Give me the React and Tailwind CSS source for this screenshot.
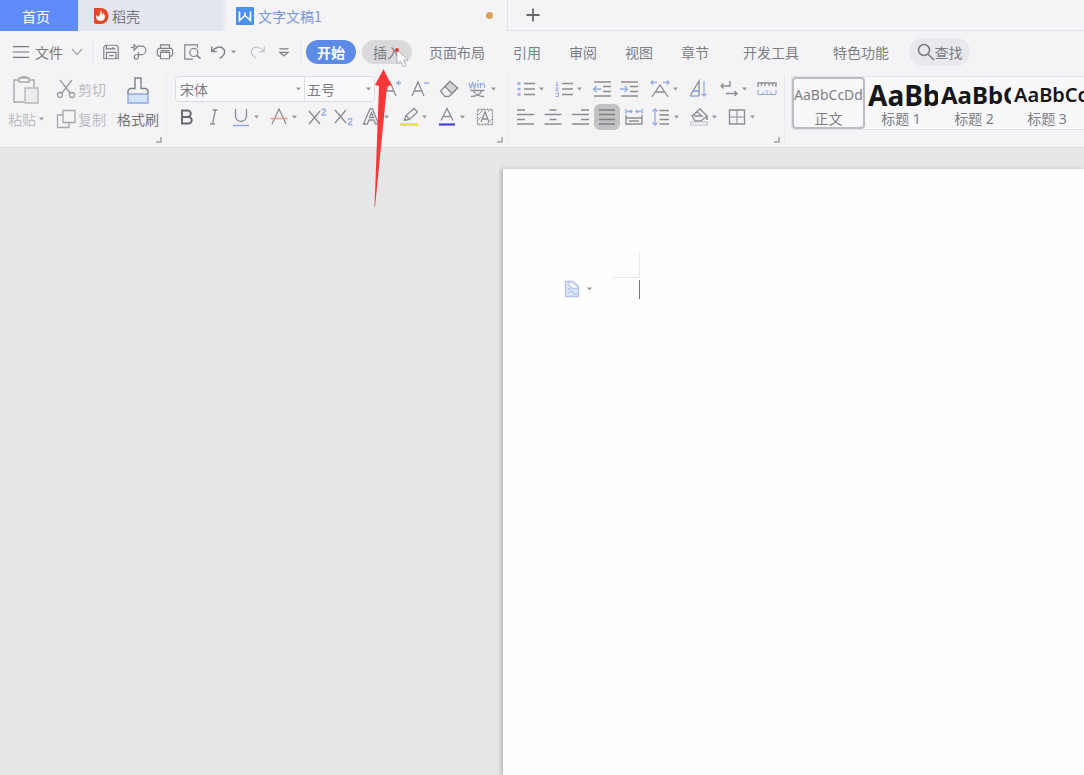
import React from 'react';
import clsx from 'clsx';

const BLUE = '#94abe8';

// Small line drawing on a 20x20 grid
function Glyph({ children, className = 'w-5 h-5' }) {
  return (
    <svg
      viewBox="0 0 20 20"
      fill="none"
      stroke="currentColor"
      strokeWidth="1.3"
      className={clsx('shrink-0', className)}
      aria-hidden="true"
    >
      {children}
    </svg>
  );
}

function Caret() {
  return (
    <svg viewBox="0 0 11 6" className="w-[11px] h-1.5 shrink-0 text-[#97979b]" aria-hidden="true">
      <path d="M3 1.5h5L5.5 4.5z" fill="currentColor" />
    </svg>
  );
}

function Tool({ label, icon, caret, active }) {
  return (
    <button aria-label={label} className="flex items-center h-[26px] text-[#8d8d91]">
      <span className={clsx('flex items-center', active && 'bg-[#c2c2c4] rounded-md -mx-[3px] p-[3px]')}>
        <Glyph>{icon}</Glyph>
      </span>
      {caret && <Caret />}
    </button>
  );
}

const icons = {
  save: <><path d="M2 17.500v-13l2-2h12l2 2v13zM5 2.500v4h10M5 17.500v-7h10.500v7M12 6.500v-2M8 14h5" /></>,
  exportDoc: <><path d="M2 5h4M5.500 2 9 5 5.500 8zM9 3.500h5a4.500 4.500 0 0 1 0 9.500H8.500M10.500 10v5.500a2.500 2.500 0 0 1-2.500 2.500c-3 0-3-4.500 0-5" /></>,
  print: <><path d="M5 6V2h10v4M5 14.500H3L1.500 13V8L3 6h14l1.500 2v5L17 14.500h-2M5 10.500h10v7H5zM5 8.500h10" /></>,
  preview: <><path d="M16 5V2H2v16h9" /><circle cx="12" cy="10.500" r="4.500" /><path d="m15.500 14 4 3.500" strokeWidth="1.800" /></>,
  undo: <><path d="M2 4v5.500h5.500M2.500 9C6 4.500 12 3 15 6.500s.500 7.500-4 10.500" strokeWidth="1.600" /></>,
  redo: <><path d="M18 4v5.500h-5.500M17.500 9C14 4.500 8 3 5 6.500s-.500 7.500 4 10.500" /></>,
  more: <><path d="M5 6.500h10M5.500 10.500 10 14.500l4.500-4z" /></>,

  bold: <><path d="M5 3.500h5.500a3.200 3.200 0 0 1 0 6.500H5zM5 10h6.500a3.200 3.200 0 0 1 0 6.500H5z" stroke="#66666b" strokeWidth="1.900" /></>,
  italic: <><path d="M8.500 3h5M6 17h5M11.500 3l-3 14" /></>,
  underline: <><path d="M4.500 2v7a5.500 5.500 0 0 0 11 0V2" /><path d="M2 18.500h16" stroke={BLUE} strokeWidth="1.500" /></>,
  strike: <><path d="m3 17 7-15 7 15" /><path d="M1.500 11.500h17" stroke="#ef9a92" strokeWidth="1.500" /></>,
  sup: <><path d="m2 4 11 13M13 4 2 17" /><path d="M15 3.500c0-2 3.500-2 3.500 0C18.500 5 15 6 15 8h4" stroke={BLUE} /></>,
  sub: <><path d="m1 3 11 13M12 3 1 16" /><path d="M14.500 13c0-2 3.500-2 3.500 0 0 1.500-3.500 2.500-3.500 4.500h4" stroke={BLUE} /></>,
  textEffect: <><path d="m2.500 17 6.500-15h2.500l6 15h-3l-1.500-4H8l-1.700 4zM8.500 10.500h4l-2-5z" /></>,
  highlight: <><path d="m5.500 13.500 1.500-5 8-7 3.500 3.500-8 7.500zM7 8.500l3.500 4" /><path d="M1 17.500h18" stroke="#e6e64a" strokeWidth="3" /></>,
  fontColor: <><path d="m4 13.500 6-12 6 12M6.500 9.500h7" /><path d="M2 17.500h16" stroke="#4b3fd0" strokeWidth="2.200" /></>,
  charShade: <><path d="M2.500 2.500h15v15h-15z" strokeDasharray="2 1" /><path d="m6 15 4-10 4 10M7.500 12h5" /><path d="m3 8 5-5M12 17l5-5M3 13l3-3M13 5l2-2" strokeWidth=".8" /></>,
  grow: <><path d="m3 17 6-14 6 14M5.500 12h7" /><path d="M15 4h5M17.500 1.500v5" stroke={BLUE} /></>,
  shrink: <><path d="m2 17 6-14 6 14M4.500 12h7" /><path d="M14 4h5" stroke={BLUE} /></>,
  eraser: <><path d="m1.500 12 9.500-9.500 7.500 6.500-8.500 8.500H6z" /><path d="m6 7.500 7 7 5.500-5.500L11 2.500z" fill="#d4d4d7" /></>,
  phonetic: <><path d="m1 4 1.500 5L4.500 4l2 5L8 4M10 9V4M12.500 9V4M12.500 6c1-2 4-2 4 .500V9M10 1v1.500" stroke={BLUE} /><path d="M2.500 11.500h14M5 11.500c2 4 7 6 11 6M14 11.500c-2 4-6 6-11 6" /></>,

  bullets: <><path d="M8 4.500h11M8 10h11M8 15.500h11" /><path d="M1.500 4.500h3M1.500 10h3M1.500 15.500h3" stroke={BLUE} strokeWidth="2.600" /></>,
  numbers: <><path d="M8 4.500h11M8 10h11M8 15.500h11" /><path d="M3 2.500v4M1.500 6.500h3M1.500 9h3l-3 2.500h3M1.500 14h3v3.500h-3" stroke={BLUE} strokeWidth="1" /></>,
  outdent: <><path d="M2 3h17M11 7.500h8M11 12.500h8M2 17h17" /><path d="M9 10H2M4.500 7 1.500 10l3 3" stroke={BLUE} /></>,
  indent: <><path d="M2 3h17M11 7.500h8M11 12.500h8M2 17h17" /><path d="M1 10h7M5.500 7l3 3-3 3" stroke={BLUE} /></>,
  scale: <><path d="m2 18 8-12 8 12M5.500 13h9" /><path d="M1 3.500h6M3 1.500l-2 2 2 2M13 3.500h6M17 1.500l2 2-2 2" stroke={BLUE} /></>,
  sort: <><path d="M2 17 11 2v15M5.500 12H11" /><path d="M2 17h9M5 12h6M16 2v15M13.500 14.500 16 17l2.500-2.500" stroke={BLUE} /></>,
  marks: <><path d="M11 2v5H2M4.500 4.500 2 7l2.500 2.500M7 14.500h11M15.500 12l2.500 2.500-2.500 2.500" /></>,
  ruler: <><path d="M1 8V4h18v4M4.500 4v3M8 4v3M12 4v3M15.500 4v3" /><path d="M1 11v4.500h18V11M10 11v4M5 15l2.500-2.500M15 15l-2.500-2.500" stroke={BLUE} strokeWidth="1" /></>,
  left: <><path d="M1 3h8M1 7.500h17M1 12.500h8M1 17h17" /></>,
  center: <><path d="M6.500 3h7M1.500 7.500h17M6.500 12.500h7M1.500 17h17" /></>,
  right: <><path d="M11 3h8M2 7.500h17M11 12.500h8M2 17h17" /></>,
  justify: <><path d="M2 3h16M2 7.500h16M2 12.500h16M2 17h16" stroke="#7f7f82" /></>,
  distribute: <><path d="M2 8v9h16V8M2 11h16M5 14h10" /><path d="M2 2v5M18 2v5M3 4.500h5M12 4.500h5M6.500 3 8 4.500 6.500 6M13.500 3 12 4.500 13.500 6" stroke={BLUE} /></>,
  spacing: <><path d="M8.500 3.500H18M8.500 8H18M8.500 12.500H18M8.500 17H18" /><path d="M4 2v16M1.500 4.500 4 2l2.500 2.500M1.500 15.500 4 18l2.500-2.500" stroke={BLUE} /></>,
  fill: <><path d="m3 9 8-7 7 7-6 5H6zM5 7.500 8 5l5 4H5" /><path d="M18 9v4" strokeWidth="1.800" /><path d="M1.500 15v3h17v-3z" stroke="#c3bcc4" strokeWidth="1" /></>,
  border: <><path d="M2.500 3h15v14h-15z" /><path d="M10 3v14M2.500 10h15" strokeWidth="1" /></>,
};

const fontRow = [
  ['加粗', 'bold'], ['倾斜', 'italic'], ['下划线', 'underline', true], ['删除线', 'strike', true],
  ['上标', 'sup'], ['下标', 'sub'], ['文字效果', 'textEffect', true], ['突出显示', 'highlight', true],
  ['字体颜色', 'fontColor', true], ['字符底纹', 'charShade'],
];

const paragraphTop = [
  [['项目符号', 'bullets', true], ['编号', 'numbers', true], ['减少缩进量', 'outdent'], ['增加缩进量', 'indent']],
  [['中文版式', 'scale', true], ['排序', 'sort']],
  [['显示标记', 'marks', true], ['标尺', 'ruler']],
];

const paragraphBottom = [
  ['左对齐', 'left'], ['居中对齐', 'center'], ['右对齐', 'right'], ['两端对齐', 'justify'],
  ['分散对齐', 'distribute'], ['行距', 'spacing', true], ['底纹颜色', 'fill', true], ['边框', 'border', true],
];

const styles = [
  { name: '标题 1', sample: 'AaBb', size: 'text-[28px] font-bold' },
  { name: '标题 2', sample: 'AaBbC', size: 'text-[24px] font-bold' },
  { name: '标题 3', sample: 'AaBbCc', size: 'text-[20px] font-semibold' },
];

function ToolRow({ items, className = 'gap-[7px]' }) {
  return (
    <div className={clsx('flex items-center', className)}>
      {items.map(([label, icon, caret]) => (
        <Tool key={icon} label={label} icon={icons[icon]} caret={caret} active={icon === 'justify'} />
      ))}
    </div>
  );
}

function Launcher() {
  return (
    <svg viewBox="0 0 6 6" className="absolute right-1 bottom-0.5 w-1.5 h-1.5" fill="none" stroke="#a3a3a7" strokeWidth="1.500">
      <path d="M5 0v5H0" />
    </svg>
  );
}

function TabBar() {
  return (
    <div className="flex h-[31px]">
      <button className="w-[78px] shrink-0 bg-[#608bfb] text-white pr-1.5">首页</button>
      <button className="w-[148px] shrink-0 bg-[#e3e5ef] border-r-3 border-[#ececf2] flex items-center pl-[15px] gap-[3px] text-[#77777c]">
        <svg viewBox="0 0 16 18" className="w-4 h-[18px]" aria-hidden="true">
          <path d="M1 1h7a7.500 8 0 0 1 0 16H3a2 2 0 0 1-2-2z" fill="#e04a27" />
          <path d="M7.500 3c2 2 1 4 1.500 5 1-.5 1-1.500 1-2.500 3 3 2.500 8-2 8.500C4 14 2.500 11 3.500 8c1 .5 1.500 1.500 2 2 1-2 2.500-4 2-7z" fill="#fff" />
        </svg>
        稻壳
      </button>
      <button className="w-[282px] shrink-0 border-r border-[#e2e2e6] flex items-center pl-[10px] pr-[14px] gap-1 text-[#7c97dd]">
        <svg viewBox="0 0 18 18" className="w-[18px] h-[18px]" aria-hidden="true">
          <rect width="18" height="18" rx="1" fill="#4a90ec" />
          <path d="M3.500 4.500v9L9 8.500l5.500 5v-9M9 8.500v-3" fill="none" stroke="#fff" strokeWidth="1.600" />
        </svg>
        文字文稿1
        <span className="ml-auto w-[7px] h-[7px] rounded-full bg-[#dda05c]" />
      </button>
      <div className="flex-1 border-b border-[#e2e2e6] flex items-center pl-[18px]">
        <button aria-label="新建">
          <svg viewBox="0 0 14 14" className="w-3.5 h-3.5" stroke="#66666b" strokeWidth="1.800">
            <path d="M7 .5v13M.5 7h13" />
          </svg>
        </button>
      </div>
    </div>
  );
}

function MenuBar() {
  const quick = [['保存', 'save'], ['输出', 'exportDoc'], ['打印', 'print'], ['打印预览', 'preview'], ['撤销', 'undo'], ['恢复', 'redo'], ['更多', 'more']];
  return (
    <div className="flex items-center h-[42px] pl-3 whitespace-nowrap">
      <button className="flex items-center text-[#77777c]">
        <Glyph className="w-[18px] h-[18px]"><path d="M1 4h18M1 10h18M1 16h18" /></Glyph>
        <span className="ml-[5px] mr-2">文件</span>
        <svg viewBox="0 0 12 8" className="w-3 h-2" fill="none" stroke="#a6a6aa" strokeWidth="1.200"><path d="m1 1 5 5.500L11 1" /></svg>
      </button>
      <div className="ml-[9px] w-px h-6 bg-[#e9e9ed]" />
      <div className="flex items-center gap-[9px] ml-[9px]">
        {quick.map(([label, icon]) => (
          <button key={icon} aria-label={label} className={clsx('flex items-center', icon === 'redo' ? 'text-[#c2c2c6]' : 'text-[#808085]')}>
            <Glyph className="w-[18px] h-[18px]">{icons[icon]}</Glyph>
            {icon === 'undo' && <Caret />}
          </button>
        ))}
      </div>
      <div className="ml-[7px] mr-[5px] w-px h-6 bg-[#e9e9ed]" />
      <button className="w-[50px] h-6 rounded-full bg-[#5c8ae6] text-white font-bold">开始</button>
      <button className="relative ml-1.5 w-[50px] h-6 rounded-full bg-[#dad9dc]">
        插入
        <svg viewBox="0 0 14 22" className="absolute left-[33px] top-2 w-3.5 h-[22px]" aria-hidden="true">
          <path d="M2 2v14l3.500-3 2.500 6 3-1.500-2.500-5.500H13z" fill="#f8f8fa" stroke="#a9a9ae" strokeWidth=".8" />
          <circle cx="2" cy="2" r="2" fill="#e03a44" />
        </svg>
      </button>
      <button className="ml-[17px]">页面布局</button>
      <div className="flex gap-7 ml-7">
        <button>引用</button>
        <button>审阅</button>
        <button>视图</button>
        <button>章节</button>
      </div>
      <div className="flex gap-[34px] ml-[34px]">
        <button>开发工具</button>
        <button>特色功能</button>
      </div>
      <button className="ml-5 w-[61px] h-7 rounded-full bg-[#e8e8ee] flex items-center justify-center">
        <svg viewBox="0 0 18 18" className="w-[18px] h-[18px]" fill="none" stroke="#77777c" strokeWidth="1.500"><circle cx="7" cy="7" r="5.500" /><path d="m11 11 6 6" /></svg>
        查找
      </button>
    </div>
  );
}

function ClipboardGroup() {
  return (
    <div className="relative flex w-[167px] shrink-0 h-[72px] pl-2 pt-[3px] border-r border-[#ebebee] text-[#bdbdc1]">
      <button className="flex flex-col items-start">
        <svg viewBox="0 0 28 30" className="w-7 h-[30px] ml-1" fill="none" stroke="#a8a8ac" strokeWidth="1.400">
          <path d="M12 26H2V4h5M17 4h5v7" />
          <path d="M7 2h10v4H7zM9.500 2V1h5v1" />
          <path d="M13 12h13v15H13z" fill="#ececef" stroke="#b8b8bc" />
        </svg>
        <span className="flex items-center h-[26px]">粘贴<Caret /></span>
      </button>
      <div className="flex flex-col ml-[9px] gap-1">
        <button className="flex items-center h-[26px] gap-0.5">
          <Glyph className="w-5 h-5 text-[#9b9b9f]"><path d="m4 1 10.500 13.500M16 1 5.500 14.500" /><circle cx="4" cy="16" r="2.500" /><circle cx="16" cy="16" r="2.500" /></Glyph>
          剪切
        </button>
        <button className="flex items-center h-[26px] gap-0.5">
          <Glyph className="w-5 h-5 text-[#a8a8ac]"><path d="M7 1.500h12v12H7zM7 6H1.500v12.500H13v-5" /></Glyph>
          复制
        </button>
      </div>
      <button className="flex flex-col items-center ml-[11px] text-[#737378]">
        <svg viewBox="0 0 24 30" className="w-6 h-[30px]" fill="none" stroke="#808085" strokeWidth="1.400">
          <path d="M2 18h20v9H2z" fill="#d5e2fb" stroke="#8fa9e4" />
          <path d="M2 18v-3.500l2-2h5V2h6v10.500h5l2 2V18" />
        </svg>
        <span className="flex items-center h-[26px]">格式刷</span>
      </button>
      <Launcher />
    </div>
  );
}

function Combo({ label, value, className }) {
  return (
    <label className={clsx('relative flex items-center', className)}>
      <select aria-label={label} className="appearance-none w-full h-full bg-transparent outline-none">
        <option>{value}</option>
      </select>
      <span className="absolute right-0 pointer-events-none"><Caret /></span>
    </label>
  );
}

function Ribbon() {
  return (
    <div className="flex h-[75px] border-b border-[#dfdfe2] overflow-hidden whitespace-nowrap">
      <ClipboardGroup />
      <div className="relative w-[340px] shrink-0 h-[72px] pt-[3px] pl-2">
        <div className="flex items-center">
          <div className="flex h-[26px] w-[200px] border border-[#dcdce0] rounded bg-[#fafafc]">
            <Combo label="字体" value="宋体" className="w-[129px] pl-1 border-r border-[#dcdce0]" />
            <Combo label="字号" value="五号" className="flex-1 pl-0.5" />
          </div>
          <ToolRow
            className="gap-[9px] ml-1.5"
            items={[['增大字号', 'grow'], ['减小字号', 'shrink'], ['清除格式', 'eraser'], ['拼音指南', 'phonetic', true]]}
          />
        </div>
        <div className="mt-0.5 ml-0.5"><ToolRow items={fontRow} /></div>
        <Launcher />
      </div>
      <div className="relative w-[278px] shrink-0 h-[72px] pt-[3px] pl-2 border-x border-[#ebebee]">
        <div className="flex gap-[11px]">
          {paragraphTop.map((items) => <ToolRow key={items[0][1]} items={items} />)}
        </div>
        <div className="mt-0.5"><ToolRow items={paragraphBottom} /></div>
        <Launcher />
      </div>
      <div className="flex flex-1 min-w-0 overflow-hidden ml-1.5 mt-[3px] h-[54px] border border-r-0 border-[#e2e2e6] rounded-l bg-[#f8f8fa] font-['Noto_Sans','Noto_Sans_CJK_SC',sans-serif]">
        <button className="w-[73px] shrink-0 border-2 border-[#bdbdc1] rounded flex flex-col items-center overflow-hidden">
          <span className="h-8 leading-8 text-sm text-[#808084]">AaBbCcDd</span>
          <span className="leading-4">正文</span>
        </button>
        {styles.map((s) => (
          <button key={s.name} className="w-[73px] shrink-0 pl-[3px] pt-0.5 flex flex-col">
            <span className={clsx('h-8 w-[70px] leading-8 overflow-hidden text-left text-[#161616]', s.size)}>{s.sample}</span>
            <span className="w-full pr-1 text-center leading-4">{s.name}</span>
          </button>
        ))}
      </div>
    </div>
  );
}

function DocumentArea() {
  return (
    <main className="flex-1 flex bg-[#e7e6e9] pt-[21px] pl-[503px]">
      <div className="relative flex-1 bg-[#fefefe] shadow-[-2px_0_4px_rgba(0,0,0,0.22)]">
        {/* margin corner and text caret */}
        <div className="absolute left-[110px] top-[84px] w-[27px] h-[25px] border-r border-b border-[#e9e9e9]" />
        <div className="absolute left-[136px] top-[111px] w-px h-[19px] bg-[#777]" />
        <button aria-label="粘贴选项" className="absolute left-[61px] top-[111px] flex items-center gap-1">
          <svg viewBox="0 0 16 18" className="w-4 h-[18px]" fill="#dfe7fa" stroke="#b3c3ea" strokeWidth="1.300">
            <path d="M1.500 1.500H9l5.500 5v10h-13zM5 1.500v4l4 3h5M4 9h3M4 13l4-2 2 3h3" />
          </svg>
          <Caret />
        </button>
      </div>
    </main>
  );
}

export default function App() {
  return (
    <div className="relative min-h-screen flex flex-col overflow-hidden bg-[#f4f4f7] text-sm text-[#7d7d82] font-['Noto_Sans_CJK_SC',sans-serif]">
      <TabBar />
      <MenuBar />
      <Ribbon />
      <DocumentArea />
      {/* Red pointer to the insert tab */}
      <svg viewBox="0 0 18 138" className="absolute left-[374px] top-[69px] w-[18px] h-[138px] pointer-events-none" aria-hidden="true">
        <path d="M9.500 0 17.500 16.500 13 17 1 138H.5L5 17 1 16z" fill="#fb3737" />
      </svg>
    </div>
  );
}
